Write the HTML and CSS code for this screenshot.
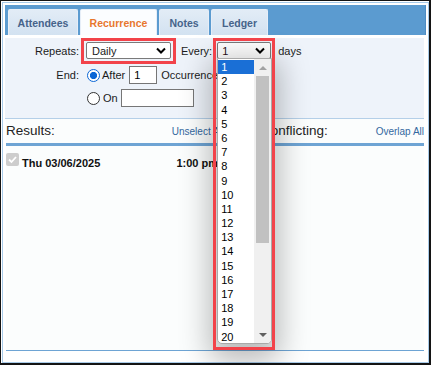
FILE: index.html
```html
<!DOCTYPE html>
<html lang="en">
<head>
  <meta charset="UTF-8">
  <title>Recurrence</title>
  <link rel="stylesheet" href="styles.css">
</head>
<body>

<div class="window">
  <div class="frame">

    <div class="tabbar">
      <div class="tab tab-att">Attendees</div>
      <div class="tab tab-rec active">Recurrence</div>
      <div class="tab tab-notes">Notes</div>
      <div class="tab tab-ledger">Ledger</div>
    </div>

    <div class="options">
      <div class="opt-row row-repeats">
        <span class="lbl">Repeats:</span>
        <span class="mark">
          <span class="sel sel-daily">Daily
            <svg class="chev" width="10" height="7" viewBox="0 0 10 7"><polyline points="1,1.5 5,5.5 9,1.5" fill="none" stroke="#000" stroke-width="2"/></svg>
          </span>
        </span>
        <span class="every-lbl">Every:</span>
        <span class="every-wrap">
          <span class="sel sel-every">1
            <svg class="chev" width="10" height="7" viewBox="0 0 10 7"><polyline points="1,1.5 5,5.5 9,1.5" fill="none" stroke="#000" stroke-width="2"/></svg>
          </span>
          <!-- open list of the Every select -->
          <div class="drop">
            <div class="items">
              <div class="item on">1</div>
              <div class="item">2</div>
              <div class="item">3</div>
              <div class="item">4</div>
              <div class="item">5</div>
              <div class="item">6</div>
              <div class="item">7</div>
              <div class="item">8</div>
              <div class="item">9</div>
              <div class="item">10</div>
              <div class="item">11</div>
              <div class="item">12</div>
              <div class="item">13</div>
              <div class="item">14</div>
              <div class="item">15</div>
              <div class="item">16</div>
              <div class="item">17</div>
              <div class="item">18</div>
              <div class="item">19</div>
              <div class="item">20</div>
            </div>
            <div class="scroll">
              <div class="arrow"><span class="tri-up"></span></div>
              <div class="thumb"></div>
              <div class="track"></div>
              <div class="arrow"><span class="tri-down"></span></div>
            </div>
          </div>
          <span class="every-mark"></span>
        </span>
        <span class="days">days</span>
      </div>

      <div class="opt-row row-end">
        <span class="lbl">End:</span>
        <span class="radio on"></span>
        <span class="after">After</span>
        <input class="num" type="text" value="1">
        <span class="occ">Occurrences</span>
      </div>

      <div class="opt-row row-on">
        <span class="lbl"></span>
        <span class="radio"></span>
        <span class="on-lbl">On</span>
        <input class="date" type="text" value="">
      </div>
    </div>

    <div class="results">
      <div class="res-head">
        <div class="res-cell">
          <span class="res-title">Results:</span>
          <span class="res-link">Unselect All</span>
        </div>
        <div class="res-cell">
          <span class="res-title">Conflicting:</span>
          <span class="res-link">Overlap All</span>
        </div>
      </div>
      <div class="res-row">
        <div class="res-item">
          <span class="check">
            <svg width="13" height="13" viewBox="0 0 13 13"><polyline points="3,6.5 5.5,9 10,4" fill="none" stroke="#fff" stroke-width="1.8"/></svg>
          </span>
          <span class="res-date">Thu 03/06/2025</span>
          <span class="res-time">1:00 pm</span>
        </div>
        <div class="res-item"></div>
      </div>
    </div>

  </div>
</div>

</body>
</html>
```

FILE: styles.css
```css
body {
  margin: 0;
  background-color: #ffffff;
  font-family: "Liberation Sans", Arial, sans-serif;
  font-size: 11px;
  color: #1b1b1b;
}

.window {
  width: 431px;
  height: 365px;
  box-sizing: border-box;
  border-style: solid;
  border-color: #141414;
  border-width: 1px 2px 2px 1px;
  padding: 1px 0 0 1px;
}

.frame {
  height: 100%;
  box-sizing: border-box;
  border: 1px solid #a8cbe9;
  padding: 2px;
  display: flex;
  flex-direction: column;
  background-color: #ffffff;
}

/* tabs */
.tabbar {
  height: 30px;
  flex: none;
  box-sizing: border-box;
  background-color: #5b9bd0;
  border-right: 1px solid #4f8cc2;
  padding: 4px 0 0 3px;
  display: flex;
  gap: 2px;
}

.tab {
  height: 26px;
  box-sizing: border-box;
  border: 1px solid #e6eef8;
  border-bottom: none;
  border-radius: 2px 2px 0 0;
  background: linear-gradient(#e2ecf6, #d3e2f1);
  color: #46638a;
  font-size: 10.5px;
  font-weight: bold;
  display: flex;
  align-items: center;
  justify-content: center;
}

.tab-att { width: 70px; }
.tab-rec { width: 77px; }
.tab-notes { width: 50px; }
.tab-ledger { width: 57px; }

.tab.active {
  background: #fbfdff;
  color: #e8772e;
}

/* options panel */
.options {
  flex: none;
  margin: 3px 2px 0 0;
  background-color: #eef3fa;
  border-bottom: 1px solid #b4cfe8;
  padding-bottom: 10px;
}

.opt-row {
  display: flex;
  align-items: center;
}

.row-repeats { height: 26px; }
.row-end { height: 20px; margin-top: 1px; }
.row-on { height: 20px; margin-top: 3px; }

.lbl {
  width: 74px;
  flex: none;
  text-align: right;
}

.mark {
  margin-left: 2px;
  border: 3px solid #f2434a;
  padding: 1px 2px 2px 2px;
  display: flex;
}

.sel {
  height: 17px;
  box-sizing: border-box;
  border: 1px solid #7a7a7a;
  border-radius: 2px;
  background-color: #ffffff;
  display: flex;
  align-items: center;
  justify-content: space-between;
}

.sel-daily {
  width: 85px;
  padding: 0 4px 0 5px;
}

.every-lbl {
  margin-left: 5px;
  margin-right: 1px;
}

.every-wrap {
  position: relative;
  padding: 4px 4px 5px 4px;
  display: flex;
}

.sel-every {
  width: 54px;
  padding: 0 5px 0 4px;
  color: #2a1020;
}

.every-mark {
  position: absolute;
  left: 0;
  top: 0;
  width: 62px;
  height: 312px;
  box-sizing: border-box;
  border: 3px solid #f2434a;
  z-index: 11;
  pointer-events: none;
}

.drop {
  position: absolute;
  left: 4px;
  top: 20px;
  width: 55px;
  height: 286px;
  box-sizing: border-box;
  border: 1px solid #a9a9a9;
  border-radius: 0 0 5px 5px;
  background-color: #ffffff;
  overflow: hidden;
  display: flex;
  z-index: 10;
  box-shadow: 0 10px 30px 8px rgba(0, 0, 0, 0.27);
}

.items {
  flex: 1;
  padding-top: 1px;
}

.item {
  height: 14.2px;
  line-height: 14.2px;
  padding-left: 3px;
  color: #000000;
}

.item.on {
  background-color: #1a6fd6;
  color: #ffffff;
}

.scroll {
  width: 17px;
  flex: none;
  background-color: #f0f0f0;
  display: flex;
  flex-direction: column;
  align-items: center;
}

.arrow {
  height: 17px;
  flex: none;
  display: flex;
  align-items: center;
  justify-content: center;
}

.tri-up {
  border-left: 4px solid transparent;
  border-right: 4px solid transparent;
  border-bottom: 4px solid #a3a3a3;
}

.tri-down {
  border-left: 4px solid transparent;
  border-right: 4px solid transparent;
  border-top: 4px solid #606060;
}

.thumb {
  width: 13px;
  height: 167px;
  flex: none;
  background-color: #c1c1c1;
}

.track { flex: 1; }

.days { margin-left: 3px; }

.radio {
  width: 13px;
  height: 13px;
  flex: none;
  box-sizing: border-box;
  margin-left: 8px;
  border: 1px solid #333333;
  border-radius: 50%;
  background: #ffffff;
}

.radio.on {
  border-color: #0b67d6;
  background: radial-gradient(circle, #0b67d6 0 3.3px, #ffffff 3.9px);
}

.after { margin-left: 2px; }

.num, .date {
  height: 18px;
  box-sizing: border-box;
  border: 1px solid #767676;
  background: #ffffff;
  font: inherit;
  color: #000;
  padding: 0 0 0 4px;
  outline: none;
}

.num {
  width: 28px;
  margin: 0 0 0 4px;
}

.occ { margin-left: 4px; white-space: nowrap; }

.on-lbl { margin-left: 3px; }

.date {
  width: 73px;
  margin: 0 0 0 3px;
}

/* results */
.results {
  flex: 1;
  margin: 0 2px 9px 1px;
  border-bottom: 1px solid #6ea4d4;
  background-color: #fbfdfd;
}

.res-head,
.res-row {
  display: grid;
  grid-template-columns: 218px 1fr;
  column-gap: 37px;
}

.res-head {
  padding: 4px 0 3px;
  border-bottom: 3px solid #6ea4d4;
  line-height: 16px;
}

.res-cell {
  display: flex;
  justify-content: space-between;
  align-items: baseline;
}

.res-title {
  font-size: 13.5px;
  color: #222222;
}

.res-link {
  font-size: 10px;
  color: #33689f;
}

.res-row { padding-top: 7px; }

.res-item {
  display: flex;
  align-items: flex-start;
}

.check {
  width: 13px;
  height: 13px;
  flex: none;
  border-radius: 2px;
  background-color: #cdcdcd;
  display: flex;
}

.res-date,
.res-time {
  margin-top: 3px;
  line-height: 14px;
  font-weight: bold;
  color: #111111;
}

.res-date { margin-left: 3px; }

.res-time {
  margin-left: auto;
  margin-right: 6px;
}
```
